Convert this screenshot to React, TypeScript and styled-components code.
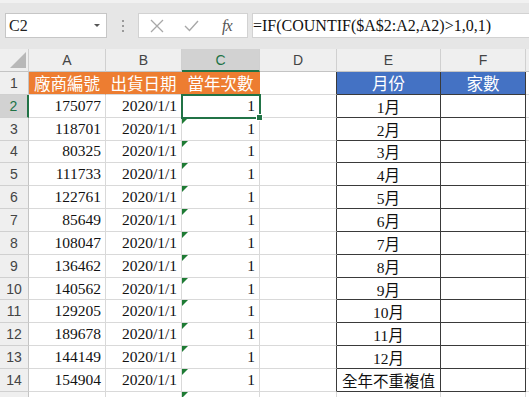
import React from "react";
import styled, { createGlobalStyle, css } from "styled-components";

const GlobalStyle = createGlobalStyle`
  html, body {
    margin: 0;
    padding: 0;
    background: #ffffff;
  }
  body {
    font-family: "Liberation Serif", "Noto Sans CJK TC", serif;
  }
`;

const GREEN = "#217346";
const GRID = "#d9d9d9";
const DARK = "#3a3a3a";

const Window = styled.div`
  width: 529px;
  height: 397px;
  display: flex;
  flex-direction: column;
  overflow: hidden;
  background: #ffffff;
`;

const FormulaBar = styled.div`
  height: 49px;
  flex-shrink: 0;
  box-sizing: border-box;
  background: #e6e6e6;
  border-top: 3px solid #f1f1f1;
  padding: 10px 0 0 5px;
  display: flex;
  align-items: flex-start;
`;

const NameBox = styled.div`
  width: 102px;
  height: 25px;
  box-sizing: border-box;
  background: #ffffff;
  border: 1px solid #c6c6c6;
  display: flex;
  align-items: center;
  justify-content: space-between;
  padding: 0 6px 0 3px;
  font-size: 16px;
  color: #222;
`;

const Caret = styled.span`
  width: 0;
  height: 0;
  border-left: 3px solid transparent;
  border-right: 3px solid transparent;
  border-top: 3px solid #555;
`;

const Dots = styled.div`
  width: 31px;
  height: 25px;
  display: flex;
  flex-direction: column;
  align-items: center;
  justify-content: center;
  gap: 3px;

  span {
    width: 2px;
    height: 2px;
    background: #9a9a9a;
  }
`;

const IconBox = styled.div`
  width: 110px;
  height: 25px;
  box-sizing: border-box;
  background: #ffffff;
  border: 1px solid #d2d2d2;
  display: flex;
  align-items: center;
  padding-left: 11px;
  gap: 20px;
`;

const Fx = styled.span`
  font-family: "Liberation Serif", serif;
  font-style: italic;
  font-size: 16px;
  color: #555;
  letter-spacing: -1px;
  margin-left: 3px;
`;

const FormulaInput = styled.div`
  flex: 1;
  height: 25px;
  margin-left: 4px;
  box-sizing: border-box;
  background: #ffffff;
  border: 1px solid #d2d2d2;
  border-right: none;
  display: flex;
  align-items: center;
  font-size: 16px;
  color: #111;
  white-space: nowrap;
`;

const Sheet = styled.div`
  flex: 1;
  display: grid;
  grid-template-columns: 29px 77px 76px 78px 77px 104px 85px 1fr;
  grid-template-rows: 23px repeat(15, 22.85px);
  overflow: hidden;
`;

const HeaderCell = styled.div<{ $active?: boolean }>`
  box-sizing: border-box;
  background: ${(p) => (p.$active ? "#d2d2d2" : "#efefef")};
  border-right: 1px solid #d0d0d0;
  border-bottom: ${(p) => (p.$active ? `2px solid ${GREEN}` : "1px solid #c4c4c4")};
  display: flex;
  align-items: center;
  justify-content: center;
  font-family: "Liberation Sans", sans-serif;
  font-size: 14px;
  color: ${(p) => (p.$active ? GREEN : "#444")};
`;

const Corner = styled.div`
  box-sizing: border-box;
  background: #efefef;
  border-right: 1px solid #d0d0d0;
  border-bottom: 1px solid #c4c4c4;
  display: flex;
  align-items: flex-end;
  justify-content: flex-end;
  padding: 0 2px 3px 0;

  span {
    width: 0;
    height: 0;
    border-left: 16px solid transparent;
    border-bottom: 16px solid #b8b8b8;
  }
`;

const RowHeader = styled.div<{ $active?: boolean }>`
  box-sizing: border-box;
  background: ${(p) => (p.$active ? "#d2d2d2" : "#efefef")};
  border-right: ${(p) => (p.$active ? `2px solid ${GREEN}` : "1px solid #c4c4c4")};
  border-bottom: 1px solid #d0d0d0;
  display: flex;
  align-items: center;
  justify-content: center;
  font-family: "Liberation Sans", sans-serif;
  font-size: 14px;
  color: ${(p) => (p.$active ? GREEN : "#444")};
`;

type Fill = "orange" | "blue" | undefined;

const Cell = styled.div<{
  $align?: "left" | "right" | "center";
  $fill?: Fill;
  $box?: boolean;
  $darkRight?: boolean;
  $selected?: boolean;
  $cjk?: boolean;
}>`
  position: relative;
  box-sizing: border-box;
  display: flex;
  align-items: center;
  justify-content: ${(p) =>
    p.$align === "right" ? "flex-end" : p.$align === "center" ? "center" : "flex-start"};
  padding: 0 4px;
  font-size: ${(p) => (p.$cjk ? "16.5px" : "15.5px")};
  white-space: nowrap;
  color: #111;
  border-right: 1px solid ${GRID};
  border-bottom: 1px solid ${GRID};
  ${(p) =>
    p.$fill === "orange" &&
    css`
      background: #ed7d31;
      color: #ffffff;
      border-right-color: #ed7d31;
    `}
  ${(p) =>
    p.$fill === "blue" &&
    css`
      background: #4472c4;
      color: #ffffff;
    `}
  ${(p) =>
    p.$box &&
    css`
      border-right-color: ${DARK};
      border-bottom-color: ${DARK};
    `}
  ${(p) =>
    p.$darkRight &&
    css`
      border-right-color: ${DARK};
    `}
  ${(p) =>
    p.$selected &&
    css`
      outline: 2px solid ${GREEN};
      outline-offset: -1px;
      z-index: 2;
    `}
`;

const Flag = styled.span`
  position: absolute;
  top: 0;
  left: 0;
  width: 0;
  height: 0;
  border-top: 6px solid #1e7b34;
  border-right: 6px solid transparent;
`;

const Handle = styled.span`
  position: absolute;
  right: -4px;
  bottom: -4px;
  width: 5px;
  height: 5px;
  background: ${GREEN};
  border: 1px solid #ffffff;
  z-index: 3;
`;

const ids = [
  175077, 118701, 80325, 111733, 122761, 85649, 108047, 136462, 140562, 129205,
  189678, 144149, 154904,
];

const months = [
  "1月", "2月", "3月", "4月", "5月", "6月", "7月", "8月", "9月", "10月", "11月", "12月",
  "全年不重複值",
];

const columns = ["A", "B", "C", "D", "E", "F", ""];

const CrossIcon = () => (
  <svg width="14" height="14" viewBox="0 0 14 14">
    <path d="M1 1 L13 13 M13 1 L1 13" stroke="#a8a8a8" strokeWidth="1.3" fill="none" />
  </svg>
);

const CheckIcon = () => (
  <svg width="15" height="12" viewBox="0 0 15 12">
    <path d="M1 6 L5.5 10.5 L14 1" stroke="#a8a8a8" strokeWidth="1.4" fill="none" />
  </svg>
);

export default function App() {
  const rows: React.ReactNode[] = [];

  // row 1: table headers
  rows.push(
    <React.Fragment key="r1">
      <RowHeader>1</RowHeader>
      <Cell $align="center" $fill="orange" $cjk>廠商編號</Cell>
      <Cell $align="center" $fill="orange" $cjk>出貨日期</Cell>
      <Cell $align="center" $fill="orange" $cjk>當年次數</Cell>
      <Cell $darkRight />
      <Cell $align="center" $fill="blue" $box $cjk>月份</Cell>
      <Cell $align="center" $fill="blue" $box $cjk>家數</Cell>
      <Cell />
    </React.Fragment>
  );

  for (let i = 0; i < 14; i++) {
    const n = i + 2;
    const inData = i < 13;
    rows.push(
      <React.Fragment key={`r${n}`}>
        {/* row 15 only peeks in at the bottom edge, its label is out of view */}
        <RowHeader $active={n === 2}>{inData ? n : ""}</RowHeader>
        <Cell $align="right">{inData ? ids[i] : ""}</Cell>
        <Cell $align="right">{inData ? "2020/1/1" : ""}</Cell>
        <Cell $align="right" $selected={n === 2}>
          {n > 2 && <Flag />}
          {inData ? 1 : ""}
          {n === 2 && <Handle />}
        </Cell>
        <Cell $darkRight={inData} />
        <Cell $align="center" $box={inData}>{inData ? months[i] : ""}</Cell>
        <Cell $box={inData} />
        <Cell />
      </React.Fragment>
    );
  }

  return (
    <>
      <GlobalStyle />
      <Window>
        <FormulaBar>
          <NameBox>
            C2
            <Caret />
          </NameBox>
          <Dots>
            <span />
            <span />
            <span />
          </Dots>
          <IconBox>
            <CrossIcon />
            <CheckIcon />
            <Fx>fx</Fx>
          </IconBox>
          <FormulaInput>=IF(COUNTIF($A$2:A2,A2)&gt;1,0,1)</FormulaInput>
        </FormulaBar>
        <Sheet>
          <Corner>
            <span />
          </Corner>
          {columns.map((c) => (
            <HeaderCell key={c || "g"} $active={c === "C"}>
              {c}
            </HeaderCell>
          ))}
          {rows}
        </Sheet>
      </Window>
    </>
  );
}
